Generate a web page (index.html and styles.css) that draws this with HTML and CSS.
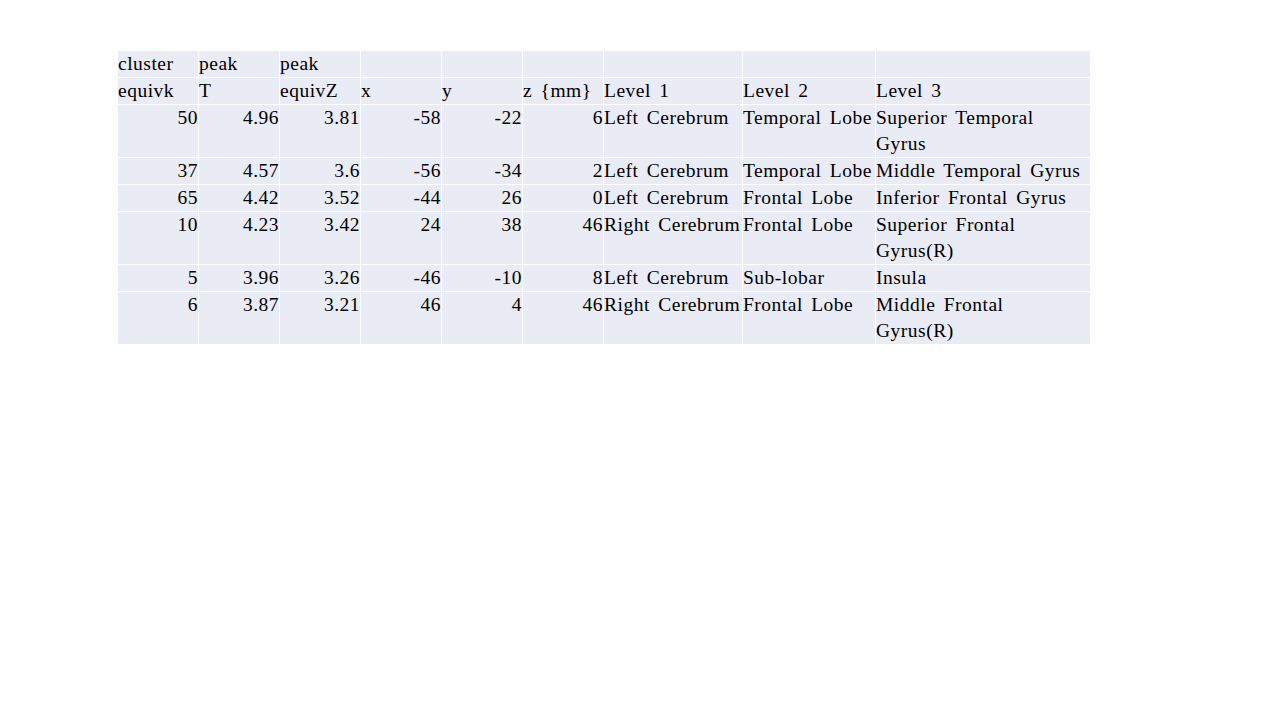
FILE: index.html
```html
<!DOCTYPE html>
<html>
<head>
<meta charset="utf-8">
<link rel="stylesheet" href="styles.css">
</head>
<body>
<div class="slide">
<table class="grid">
<colgroup>
<col class="c1"><col class="c2"><col class="c3"><col class="c4"><col class="c5"><col class="c6"><col class="c7"><col class="c8"><col class="c9">
</colgroup>
<tr><td>cluster</td><td>peak</td><td>peak</td><td></td><td></td><td></td><td></td><td></td><td></td></tr>
<tr><td>equivk</td><td>T</td><td>equivZ</td><td>x</td><td>y</td><td>z {mm}</td><td>Level 1</td><td>Level 2</td><td>Level 3</td></tr>
<tr><td class="n">50</td><td class="n">4.96</td><td class="n">3.81</td><td class="n">-58</td><td class="n">-22</td><td class="n">6</td><td>Left Cerebrum</td><td>Temporal Lobe</td><td>Superior Temporal Gyrus</td></tr>
<tr><td class="n">37</td><td class="n">4.57</td><td class="n">3.6</td><td class="n">-56</td><td class="n">-34</td><td class="n">2</td><td>Left Cerebrum</td><td>Temporal Lobe</td><td>Middle Temporal Gyrus</td></tr>
<tr><td class="n">65</td><td class="n">4.42</td><td class="n">3.52</td><td class="n">-44</td><td class="n">26</td><td class="n">0</td><td>Left Cerebrum</td><td>Frontal Lobe</td><td>Inferior Frontal Gyrus</td></tr>
<tr><td class="n">10</td><td class="n">4.23</td><td class="n">3.42</td><td class="n">24</td><td class="n">38</td><td class="n">46</td><td>Right Cerebrum</td><td>Frontal Lobe</td><td>Superior Frontal Gyrus(R)</td></tr>
<tr><td class="n">5</td><td class="n">3.96</td><td class="n">3.26</td><td class="n">-46</td><td class="n">-10</td><td class="n">8</td><td>Left Cerebrum</td><td>Sub-lobar</td><td>Insula</td></tr>
<tr><td class="n">6</td><td class="n">3.87</td><td class="n">3.21</td><td class="n">46</td><td class="n">4</td><td class="n">46</td><td>Right Cerebrum</td><td>Frontal Lobe</td><td>Middle Frontal Gyrus(R)</td></tr>
</table>
</div>
</body>
</html>
```
FILE: styles.css
```css
html, body {
  margin: 0;
  padding: 0;
  background: #ffffff;
}
.slide {
  width: 1280px;
  height: 720px;
  padding: 50px 0 0 117px;
  box-sizing: border-box;
}
.grid {
  border-collapse: collapse;
  table-layout: fixed;
  width: 973px;
  font-family: "Liberation Serif", "Times New Roman", serif;
  font-size: 19.5px;
  line-height: 26px;
  color: #000000;
}
.grid td {
  background: #e9ebf5;
  border: 1px solid #ffffff;
  padding: 0;
  vertical-align: top;
  text-align: left;
  white-space: normal;
  letter-spacing: 0.5px;
  word-spacing: 3px;
}
.grid td:last-child {
  padding-right: 6px;
}
.grid td.n {
  text-align: right;
  padding: 0;
}
.c1 { width: 81px; }
.c2 { width: 81px; }
.c3 { width: 81px; }
.c4 { width: 81px; }
.c5 { width: 81px; }
.c6 { width: 81px; }
.c7 { width: 139px; }
.c8 { width: 133px; }
.c9 { width: 215px; }
```
